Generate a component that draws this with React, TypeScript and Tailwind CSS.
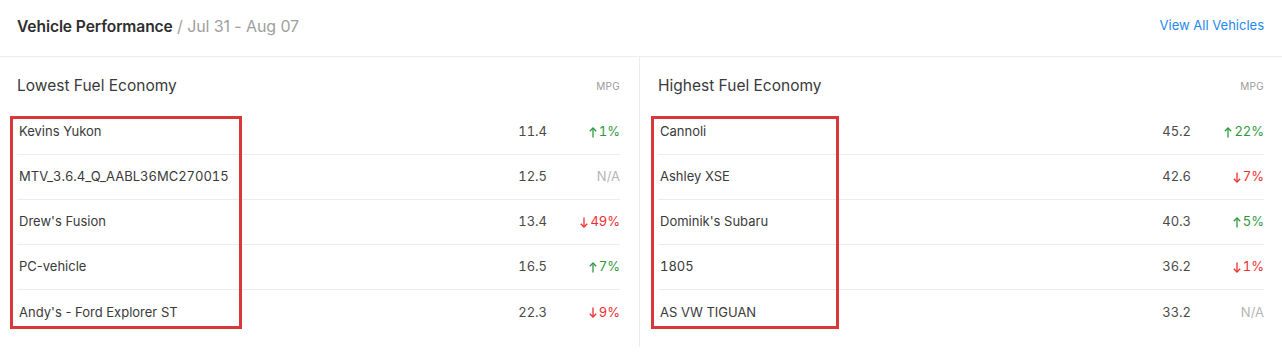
import React from 'react'

type Row = { name: string; mpg: string; change: number | null }

const lowest: Row[] = [
  { name: 'Kevins Yukon', mpg: '11.4', change: 1 },
  { name: 'MTV_3.6.4_Q_AABL36MC270015', mpg: '12.5', change: null },
  { name: "Drew's Fusion", mpg: '13.4', change: -49 },
  { name: 'PC-vehicle', mpg: '16.5', change: 7 },
  { name: "Andy's - Ford Explorer ST", mpg: '22.3', change: -9 },
]

const highest: Row[] = [
  { name: 'Cannoli', mpg: '45.2', change: 22 },
  { name: 'Ashley XSE', mpg: '42.6', change: -7 },
  { name: "Dominik's Subaru", mpg: '40.3', change: 5 },
  { name: '1805', mpg: '36.2', change: -1 },
  { name: 'AS VW TIGUAN', mpg: '33.2', change: null },
]

function Arrow({ up }: { up: boolean }) {
  return (
    <svg width="8" height="11" viewBox="0 0 8 11" fill="none" stroke="currentColor" strokeWidth="1.3" className="mr-[2px]">
      {up ? (
        <>
          <path d="M4 10.5V1" />
          <path d="M0.8 4.2L4 1l3.2 3.2" />
        </>
      ) : (
        <>
          <path d="M4 0.5V10" />
          <path d="M0.8 6.8L4 10l3.2-3.2" />
        </>
      )}
    </svg>
  )
}

function Change({ value }: { value: number | null }) {
  if (value === null) return <span className="text-[#b5b5b5]">N/A</span>
  const up = value > 0
  return (
    <span className={`flex items-center tabular-nums ${up ? 'text-[#2e9a3e]' : 'text-[#ee2f2f]'}`}>
      <Arrow up={up} />
      {Math.abs(value)}%
    </span>
  )
}

function Panel({ title, rows, boxClass, className }: { title: string; rows: Row[]; boxClass: string; className: string }) {
  return (
    <div className={`relative ${className}`}>
      <div className="flex items-center justify-between h-[60px] pb-[2px]">
        <span className="text-[15.5px] text-[#3a3a3a]">{title}</span>
        <span className="text-[10px] text-[#9a9a9a] tracking-[0.3px]">MPG</span>
      </div>
      <div className="mt-[-7px]">
        {rows.map((r, i) => (
          <div key={r.name} className={`flex items-center h-[45px] text-[13px] ${i < rows.length - 1 ? 'border-b border-[#ececec]' : ''}`}>
            <span className={`flex-1 pl-[2px] text-[#3a3a3a] ${/\d/.test(r.name) ? 'tabular-nums' : ''}`}>{r.name}</span>
            <span className="text-[#4a4a4a] tabular-nums">{r.mpg}</span>
            <span className="w-[73px] flex justify-end">
              <Change value={r.change} />
            </span>
          </div>
        ))}
      </div>
      <div className={`absolute top-[59px] h-[213px] border-[3px] border-[#d9383a] pointer-events-none ${boxClass}`} />
    </div>
  )
}

export default function App() {
  return (
    <div className="w-[1282px] h-[353px] bg-white font-['Inter',sans-serif] overflow-hidden">
      <div className="flex items-center justify-between h-[57px] px-[17px] pb-[4px] border-b border-[#ededed]">
        <div className="text-[16px] tracking-[-0.1px]">
          <span className="font-semibold text-[15.6px] text-[#2e2e2e]">Vehicle Performance</span>
          <span className="text-[#a0a0a0]"> / Jul 31 - Aug 07</span>
        </div>
        <a className="text-[13px] text-[#1e88f0] mr-[1px]">View All Vehicles</a>
      </div>
      <div className="flex h-[290px]">
        <Panel title="Lowest Fuel Economy" rows={lowest} boxClass="left-[10px] w-[232px]" className="w-[640px] pl-[17px] pr-[19px] border-r border-[#ececec]" />
        <Panel title="Highest Fuel Economy" rows={highest} boxClass="left-[11px] w-[188px]" className="flex-1 pl-[18px] pr-[18px]" />
      </div>
    </div>
  )
}
